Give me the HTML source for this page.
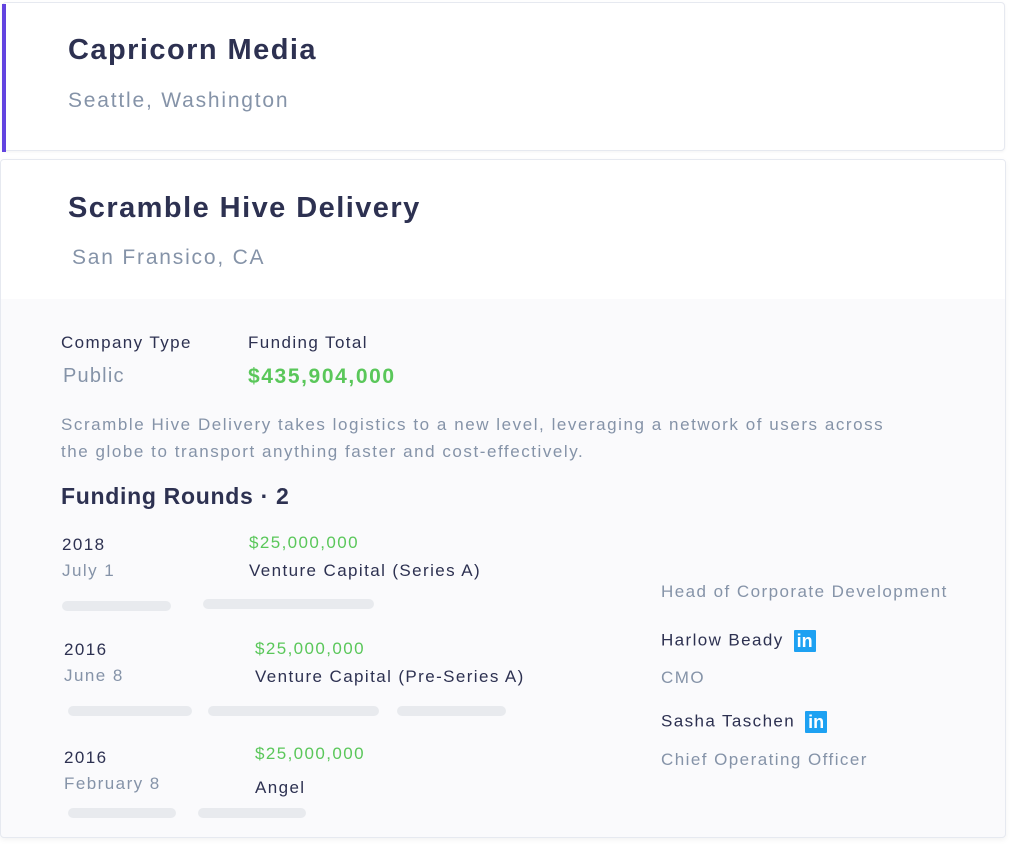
<!DOCTYPE html>
<html><head><style>
body{margin:0;width:1024px;height:857px;background:#fff;font-family:"Liberation Sans",sans-serif;position:relative;overflow:hidden}
.a{position:absolute;white-space:nowrap}
.t{color:#2d3151;font-weight:bold;font-size:29px;letter-spacing:1.45px}
.s{color:#8593a8;font-size:21px;letter-spacing:1.8px}
.l{color:#2d3151;font-size:17px;letter-spacing:1.4px}
.g{color:#5ac75a;font-size:17px;letter-spacing:1.4px}
.m{color:#8593a8;font-size:17px;letter-spacing:1.45px}
.b{position:absolute;height:10px;background:#e8eaee;border-radius:5px}
.li{display:inline-block;width:22px;height:22px;background:#1da1f2;color:#fff;font-weight:bold;font-size:18px;line-height:23px;text-align:center;border-radius:1px;vertical-align:middle;margin-left:10px;letter-spacing:0}
</style></head><body>
<div class="a" style="left:2px;top:2px;width:1001px;height:147px;border:1px solid #e6e9f0;border-radius:4px;background:#fff;box-shadow:0 1px 3px rgba(0,0,0,.05)"></div>
<div class="a" style="left:2px;top:4px;width:4px;height:148px;background:#6244e0"></div>
<div class="a t" style="left:68px;top:34px">Capricorn Media</div>
<div class="a s" style="left:68px;top:89px">Seattle, Washington</div>

<div class="a" style="left:0;top:159px;width:1004px;height:677px;border:1px solid #e6e9f0;border-radius:4px;background:#fafafc;overflow:hidden;box-shadow:0 2px 6px rgba(0,0,0,.05)">
<div style="height:139px;background:#fff"></div></div>
<div class="a t" style="left:68px;top:192px">Scramble Hive Delivery</div>
<div class="a s" style="left:72px;top:246px">San Fransico, CA</div>

<div class="a l" style="left:61px;top:333px">Company Type</div>
<div class="a l" style="left:248px;top:333px">Funding Total</div>
<div class="a s" style="left:63px;top:365px;font-size:20px;letter-spacing:1.2px">Public</div>
<div class="a g" style="left:248px;top:365px;font-size:21px;font-weight:bold;letter-spacing:1.6px">$435,904,000</div>
<div class="a m" style="left:61px;top:411px;line-height:27px;letter-spacing:1.55px">Scramble Hive Delivery takes logistics to a new level, leveraging a network of users across<br>the globe to transport anything faster and cost-effectively.</div>
<div class="a t" style="left:61px;top:483px;font-size:23px;letter-spacing:0.7px">Funding Rounds · 2</div>

<div class="a l" style="left:62px;top:535px">2018</div>
<div class="a m" style="left:62px;top:561px">July 1</div>
<div class="a g" style="left:249px;top:533px">$25,000,000</div>
<div class="a l" style="left:249px;top:561px">Venture Capital (Series A)</div>
<div class="b" style="left:62px;top:601px;width:109px"></div>
<div class="b" style="left:203px;top:599px;width:171px"></div>

<div class="a l" style="left:64px;top:640px">2016</div>
<div class="a m" style="left:64px;top:666px">June 8</div>
<div class="a g" style="left:255px;top:639px">$25,000,000</div>
<div class="a l" style="left:255px;top:667px">Venture Capital (Pre-Series A)</div>
<div class="b" style="left:68px;top:706px;width:124px"></div>
<div class="b" style="left:208px;top:706px;width:171px"></div>
<div class="b" style="left:397px;top:706px;width:109px"></div>

<div class="a l" style="left:64px;top:748px">2016</div>
<div class="a m" style="left:64px;top:774px">February 8</div>
<div class="a g" style="left:255px;top:744px">$25,000,000</div>
<div class="a l" style="left:255px;top:778px">Angel</div>
<div class="b" style="left:68px;top:808px;width:108px"></div>
<div class="b" style="left:198px;top:808px;width:108px"></div>

<div class="a m" style="left:661px;top:582px">Head of Corporate Development</div>
<div class="a l" style="left:661px;top:630px">Harlow Beady<span class="li">in</span></div>
<div class="a m" style="left:661px;top:668px">CMO</div>
<div class="a l" style="left:661px;top:711px">Sasha Taschen<span class="li">in</span></div>
<div class="a m" style="left:661px;top:750px">Chief Operating Officer</div>
</body></html>
